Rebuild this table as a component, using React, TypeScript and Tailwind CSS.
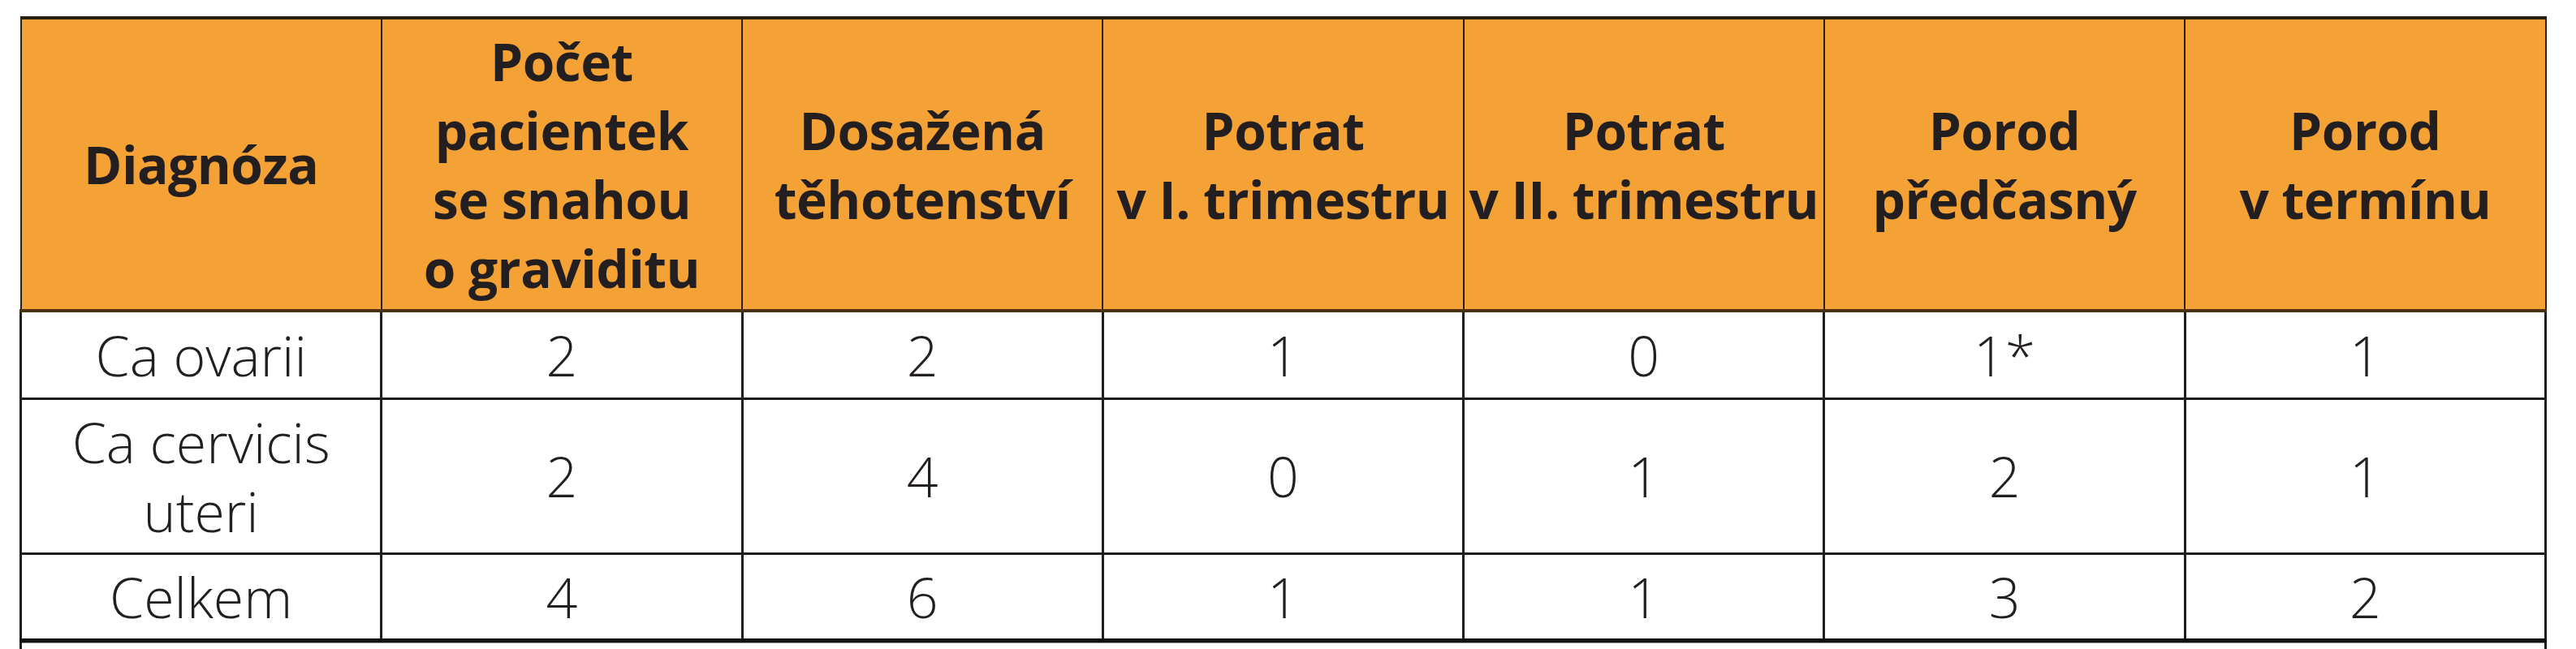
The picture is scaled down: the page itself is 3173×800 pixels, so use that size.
import React from "react";

const headers: string[][] = [
  ["Diagnóza"],
  ["Počet", "pacientek", "se snahou", "o graviditu"],
  ["Dosažená", "těhotenství"],
  ["Potrat", "v I. trimestru"],
  ["Potrat", "v II. trimestru"],
  ["Porod", "předčasný"],
  ["Porod", "v termínu"],
];

const rows: { cells: string[][]; h: string }[] = [
  { cells: [["Ca ovarii"], ["2"], ["2"], ["1"], ["0"], ["1*"], ["1"]], h: "h-[108px]" },
  { cells: [["Ca cervicis", "uteri"], ["2"], ["4"], ["0"], ["1"], ["2"], ["1"]], h: "h-[191px]" },
  { cells: [["Celkem"], ["4"], ["6"], ["1"], ["1"], ["3"], ["2"]], h: "h-[107px]" },
];

export default function App() {
  return (
    <div className="w-[3173px] h-[800px] overflow-hidden bg-white pt-[20px] pl-[24px]">
      <table
        className="table-fixed border-collapse w-[3113px] text-[#231f20]"
        style={{ fontFamily: '"Open Sans", "Noto Sans", sans-serif' }}
      >
        <colgroup>
          {headers.map((_, i) => (
            <col key={i} className="w-[444px]" />
          ))}
        </colgroup>
        <thead>
          <tr className="h-[361px]">
            {headers.map((lines, i) => (
              <th
                key={i}
                className="bg-[#f4a236] border-x-[2px] border-x-[#2a1f14] border-t-[4px] border-t-[#2a1f14] border-b-[4px] border-b-[#4a3211] text-center align-middle font-bold text-[64px] leading-[85px] tracking-[-0.5px] p-0"
              >
                {lines.map((l, j) => (
                  <div key={j}>{l}</div>
                ))}
              </th>
            ))}
          </tr>
        </thead>
        <tbody>
          {rows.map((r, ri) => (
            <tr key={ri} className={r.h}>
              {r.cells.map((lines, ci) => (
                <td
                  key={ci}
                  className={
                    "border-x-[3px] border-x-[#1e1e1e] border-t-[3px] border-t-[#1e1e1e] text-center align-middle font-light text-[68px] leading-[85px] p-0 " +
                    (ri === rows.length - 1 ? "border-b-[5px] border-b-[#111111]" : "border-b-[3px] border-b-[#1e1e1e]")
                  }
                >
                  {lines.map((l, j) => (
                    <div key={j}>{l}</div>
                  ))}
                </td>
              ))}
            </tr>
          ))}
          <tr className="h-[200px]">
            <td colSpan={7} className="border-x-[3px] border-x-[#1e1e1e] p-0 align-top">
              <div className="h-[1px] bg-[#9a9a9a]" />
            </td>
          </tr>
        </tbody>
      </table>
    </div>
  );
}
